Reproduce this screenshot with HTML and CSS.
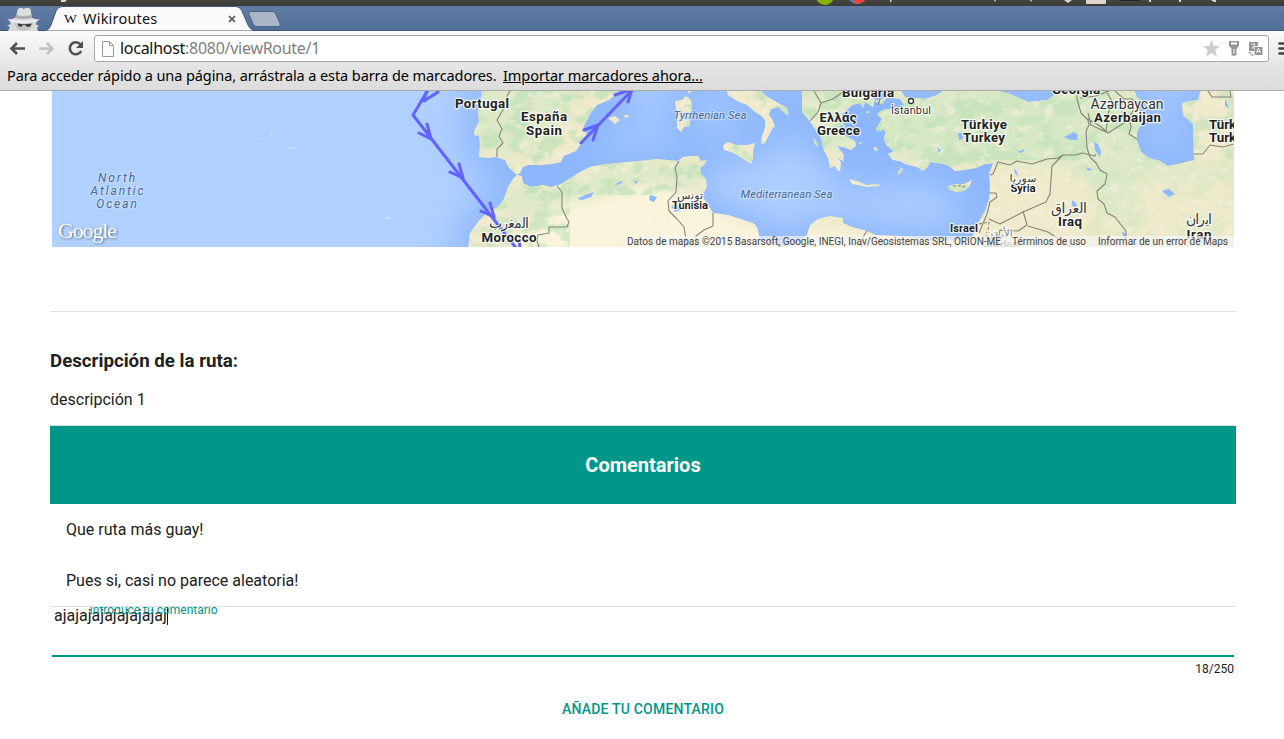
FILE: index.html
```html
<!DOCTYPE html>
<html lang="es">
<head>
<meta charset="utf-8">
<title>Wikiroutes</title>
<link rel="stylesheet" href="styles.css">
</head>
<body>
<div class="system-bar">
  <svg width="1284" height="6" viewBox="0 0 1284 6">
    <path d="M61 0h6l-2 2h-4z" fill="#ddd8d0"/>
    <circle cx="825" cy="-4" r="9" fill="#85b500"/>
    <circle cx="857" cy="-5" r="9" fill="#3b8de0"/><circle cx="858.500" cy="-4.500" r="8" fill="#f04135"/>
    <path d="M890 0h1.500v2h-1.500zM994 0h2l-1 2zM1030 0h2l-1 2zM1064 0h8l-4 3zM1149 0h2v2h-2zM1179 0h2v2h-2zM1211 0l3 2h2v-2z" fill="#dbd7ce"/>
    <rect x="1086" y="-4" width="20" height="8" rx="1" fill="#ddd6cc"/>
    <rect x="1120" y="-2" width="20" height="3" fill="#252522"/>
  </svg>
</div>
<header class="tab-strip">
  <svg class="incognito" width="46" height="25" viewBox="0 6 46 25">
    <path d="M9 20l7-2.500h15l7 2.500-2.500 4 3.500 2-2 1.500 1 3.500H8l2-4-3-1.500 4-1.500z" fill="#d9dadb"/>
    <path d="M15.500 18L18 9q2.500-2.500 5.500 0 4-2.500 7 0l1.500 9q-8 2.500-16.500 0z" fill="#dcdddd"/>
    <path d="M15.500 18q8 2 16.500 0l-.5-3q-8 2-15.500 0z" fill="#aaadb0"/>
    <path d="M7 19q8 1.500 16.500 1.500T40 19q-4 4-16.500 4T7 19z" fill="#ececec"/>
    <path d="M14 23q9 1.500 19 0l-3 6-6.500 2-6.500-2z" fill="#c2c3c4"/>
    <path d="M18 23.500l5 .8h2.500l6-.8-.5 2q-1.500 2-4.500 1l-1.500-1.500h-2L21.500 26.500q-2.500.6-3.500-1z" fill="#3a3a3a"/>
  </svg>
  <div class="tab">
    <svg class="tab-shape" width="214" height="25" viewBox="0 0 214 25"><path d="M0 25q4-1 6-6l5-14q2-4.500 6-4.500h174q4 0 6 4.500l6 14q3 6 9 6z" fill="#fafafa" stroke="#3e577b" stroke-width="1"/></svg>
    <span class="favicon">W</span><span class="tab-title">Wikiroutes</span>
    <svg class="tab-close" width="8" height="8" viewBox="0 0 8 8"><path d="M1 1l6 6M7 1L1 7" stroke="#555" stroke-width="1.700"/></svg>
  </div>
  <svg class="new-tab" width="34" height="17" viewBox="0 0 34 17"><path d="M3 .5h22q2 0 3 3l4 9q1 3-1.500 3H9q-3 0-4-3L1 3.500Q0 .5 3 .5z" fill="#a9b6c5" stroke="#49648b"/></svg>
</header>
<div class="toolbar">
  <svg class="nav-icons" width="86" height="31" viewBox="0 31 86 31" fill="none">
    <path d="M25 48.500H12M17 43l-5.500 5.500L17 54" stroke="#505050" stroke-width="2.600"/>
    <path d="M39 48.500h13M47 43l5.500 5.500L47 54" stroke="#c2c2c2" stroke-width="2.600"/>
    <path d="M80.500 44.500a6 6 0 1 0 .7 6.500" stroke="#505050" stroke-width="2.600"/><path d="M83 41v7h-7z" fill="#505050"/>
  </svg>
  <div class="address">
    <svg width="12" height="16" viewBox="0 0 12 16"><path d="M.5.500h7l4 4v11H.500zM7.500.500v4h4" fill="#fbfbfb" stroke="#999"/></svg>
    <span class="url">localhost<span class="path">:8080/viewRoute/1</span></span>
    <svg class="actions" width="64" height="20" viewBox="1200 38 64 20">
      <path d="M1211.500 40l2.300 6h6.200l-4.800 4 1.900 7-5.600-4-5.600 4 1.900-7-4.800-4h6.200z" fill="#ccc"/>
      <path d="M1229 41h10v5l-2.500 2.500V55l-2.500 1-2.500-1v-6.500L1229 46z" fill="#949494"/><path d="M1231 42.500h6v2h-6zM1233.500 49h1v5h-1z" fill="#fff"/>
      <path d="M1249 42h9v4h-4v5h-5z" fill="#949494"/><path d="M1251 44h4l-3 4h2" stroke="#e6e6e6" fill="none"/>
      <rect x="1254.500" y="47" width="8" height="8" fill="#949494"/><path d="M1256.500 53l2-5 2 5m-3.500-1.500h3" stroke="#fff" fill="none"/>
      <path d="M1248.500 52.500h2m-1 1.500h3m-1 1.500h2" stroke="#949494"/>
    </svg>
  </div>
  <svg class="menu" width="6" height="14" viewBox="0 0 6 14"><path d="M1.500 1.500h6M1.500 6.500h6M1.500 11.500h6" stroke="#444" stroke-width="2.600" stroke-linecap="round"/></svg>
</div>
<div class="bookmarks"><span class="hint">Para acceder rápido a una página, arrástrala a esta barra de marcadores.</span><span class="import">Importar marcadores ahora...</span></div>

<main class="page">
  <svg class="map" width="1182" height="156" viewBox="52 91 1182 156">
    <defs>
      <filter id="soft" x="-10%" y="-40%" width="120%" height="180%"><feGaussianBlur stdDeviation="18"/></filter>
      <filter id="blend" x="-10%" y="-40%" width="120%" height="180%"><feGaussianBlur stdDeviation="7"/></filter>
      <filter id="glow" x="-50%" y="-100%" width="200%" height="300%"><feGaussianBlur stdDeviation="14"/></filter>
      <filter id="green" x="0" y="0" width="100%" height="100%" color-interpolation-filters="sRGB">
        <feTurbulence type="fractalNoise" baseFrequency=".045 .06" numOctaves="4" seed="8"/>
        <feColorMatrix values="0 0 0 0 .765  0 0 0 0 .89  0 0 0 0 .73  7 0 0 0 -3.300"/>
      </filter>
      <filter id="pale" x="0" y="0" width="100%" height="100%" color-interpolation-filters="sRGB">
        <feTurbulence type="fractalNoise" baseFrequency=".09 .12" numOctaves="3" seed="21"/>
        <feColorMatrix values="0 0 0 0 .96  0 0 0 0 .94  0 0 0 0 .87  0 10 0 0 -6"/>
      </filter>
      <path id="coast" d="M481 85V100l-3 10 1 12-5 9 1 5 4-1 1 10-1 12 9 1 8-1 9 3 4 8 8 7 3-2 3-6 6-2 12 0 11-1 9-2 3-6 12-5 7-9 4-7-4-7 3-6 5-9 6-8 12-5 9-7V85z
        M517 175L522 176 523 183 531 187 543 185 551 187 559 185 572 177 580 172 590 167 600 165 617 163 640 161 657 159 678 161 683 157 690 156 698 156 701 161 707 160 704 165 700 168 701 174 706 179 707 187 702 195 705 200 708 205 713 213 728 215 753 223 757 227 760 240 780 247 800 243 807 235 810 225 818 219 830 216 843 218 843 223 852 227 867 231 875 235 900 236 935 241 960 240 972 237 978 223 985 211 989 199 990 186 989 174 993 163 985 164 976 168 965 170 955 171 949 166 944 164 937 163 930 162 927 168 923 171 917 167 905 164 900 161 893 160 888 154 894 151 886 145 884 138 886 132 878 126 882 119 877 114 883 110 898 108 905 106 900 99 887 97 882 104 875 101 873 96 893 85H897L905 97 925 99 935 96 943 91 943 85H992L995 90 1010 94 1028 102 1048 100 1056 93 1058 85H1132L1137 97 1142 103 1138 107 1143 121 1137 132 1137 141 1141 152 1149 158 1160 161 1168 166 1182 163 1194 160 1193 131 1193 124 1183 115 1182 103 1190 101 1198 100 1202 85H1240V255H467L469 242 470 233 478 222 488 211 498 207 504 199 508 187 513 179z
        M725 85l3 10 9 6 10 4 8 7 5 3 5 5 0 8-3 8-1 8 4-1 3-6 4-8 3-3-3-7-3-4 2-6 7-2 8 7 3 1-2-7-9-5-12-7-7-8V85z
        M723 145l5-3 8 3 11 0 8-2-2 8 0 7-2 6-6-4-8-5-6-3-7-2z
        M675 101l7-1 4-4 5 4 1 8-2 9 0 9-6 1-3 5-4-4 0-11-1-9z
        M802 85v27l7 8 5 8 6 6 2 8 2 9 4 7 2 10 5-2 3 5 2 0 1-8-3-5 5 3 1-6-7-9 6 1 8 3 5-4-1-5-8-4-6-4-2-8 7 2-5-6 1-7 10-9 8-2 3 5 2-6 8 5 1-6 13-3V85z
        M849 179l8 2 10 4 12-1 1 2-12 1-16-3zM948 186l8-2 8 0 8-4-3 7-5 4-8 1-6-2zM876 127l5 0 1 4-5 0zM873 147l3 0 2 3-3 1zM897 175l3-6 3-1-2 5zM608 118l7-2 5 4-5 4zM624 115l4 0 1 2-4 1zM686 85h6v6l-3 3zM813 138l3 3 2 6-3-3zM866 112l3-1 0 2-3 0zM859 142l3 1-2 1z"/>
      <clipPath id="land"><use href="#coast"/></clipPath>
      <linearGradient id="fade"><stop offset="0" stop-color="#f5f5f5" stop-opacity="0"/><stop offset=".05" stop-color="#f5f5f5" stop-opacity=".65"/><stop offset="1" stop-color="#f5f5f5" stop-opacity=".72"/></linearGradient>
    </defs>
    <rect x="52" y="91" width="1182" height="156" fill="#b0d0ff"/>
    <use href="#coast" stroke="#86b1fc" stroke-width="26" fill="#8bb5fc" filter="url(#soft)" opacity=".85"/>
    <ellipse cx="770" cy="184" rx="70" ry="14" fill="#acceff" filter="url(#glow)"/>
    <ellipse cx="860" cy="205" rx="80" ry="12" fill="#a9cbff" filter="url(#glow)"/>
    <use href="#coast" fill="#efeacb"/>
    <g clip-path="url(#land)">
      <path d="M560 202l100-20 50 24 40 20 80 4 80 10 90 0v20H500z" fill="#f9f4db" filter="url(#blend)"/>
      <path d="M800 85h335l12 70 40 15 50-10v12l-50 12-50-8-5 60-40-45-20-25-60-5-30 0-30-4-70-8-90 5zM470 85h115l-20 40-40 32-50-8zM503 190l25-5 40 2 30-17 50-8 60 0-3 25-60-5-60 15-50 15-20 12z" fill="#dce9c7" opacity=".95" filter="url(#blend)"/>
      <path d="M875 105l20 0 60-5 40-8 60 14 25 10 0 35-40 6-50 4-60 4-45-14z" fill="#d5e7c4" opacity=".8" filter="url(#blend)"/>
      <rect x="460" y="85" width="530" height="110" filter="url(#green)" opacity=".8"/>
      <rect x="990" y="85" width="250" height="75" filter="url(#green)" opacity=".7"/>
      <rect x="460" y="195" width="110" height="58" filter="url(#green)" opacity=".7"/>
      <rect x="1070" y="160" width="170" height="93" filter="url(#green)" opacity=".25"/>
      <rect x="460" y="85" width="780" height="170" filter="url(#pale)" opacity=".5"/>
    </g>
    <g fill="#8db8ff">
      <path d="M577 199l8-4 9-3-3 5-9 3zM615 184l6-3 2 1-5 3zM633 180l5 2-2 2zM650 195l7 2-3 5-5-2zM671 206l7-1 3 5-6 2zM1064 137l10-5 4 3-1 5-6 0zM1094 142l4 2 3 8-1 5-5-7zM1017 152l8-3-3 4zM1072 200l4 3 1 4-5-1zM1162 191l7-2 6 5-6 3zM958 133l4 0 1 6-4 1zM937 147l4 3-2 3zM1014 168l3 4 1 5-3-4zM1122 231l4 3-2 7zM1225 99l4 9-4-2zM1085 167l7 2-3 2z"/>
    </g>
    <g fill="#cce0fe"><path d="M253 136l4 2 4 0 0 2-5-2zM270 133h3v2h-3zM287 147h8v1.500h-8zM385 217h5v2h-5z"/></g>
    <g fill="none" stroke="#858579" stroke-width="1.100" stroke-linejoin="round">
      <path d="M510 91l-3 5-3 12-7 12 5 9-3 7 4 7-6 6v8M557 186l5 6 0 16 4 9 3 5-2 5h-18v6l-11 2-1 6 3 9-5 6M679 161l-4 7 2 9-1 15-8 9 1 10 8 8 7 8 3 19M713 213v13l-9 4-8 6v11M814 91l7 12-3 9-8 9M821 103l12-4 10-7M878 105l2-6-1-8M867 231l-4 6-2 10"/>
      <path d="M990 175l3-1 5-12 12 3 7-4 15 3 15-5 11-1 5-3 13 0 6-2 13 3 1-2M1063 155l-11 11-2 28-4 8-23 10-23 12-11-5M1023 211l4 14-9 6-18-1-4 18M1028 226l20 6 23 15M1077 91l0 8 4 14 7 7 1 5-3 6 1 17 3 9 6 6 4 7 7 4-2 10-8 7 1 8 6 5 3 9 8 4 7 9 4 5v16M1088 119l12 7 8 7 16-10 10-8M1134 109l-5 9 2 9-2 7 8 5M1080 98l16-2 13-5M1088 113l3 12 15 7 2-17 4-14-6-10M1115 91l9 8 8 0 7 5M1194 154l9 0 7-9 13 2 11-3M1208 91l4 6 19 0-1-6M979 233l8-19 3-12 7-5-1-4-7 0"/>
      <path d="M953 186h5l3-1 2 2 4-1M979 224l10-2-1 9-5 8" stroke-dasharray="3 2"/>
    </g>
    <g class="route"><path d="M431 85L413 115l110 142M637 85L581 143"/><path d="M424 101l3-12M424 101l14-9M419 133l12 6-4-15M450 172l13 6-4-14M481 211l13 6-4-14M509 249l12 5-2-13M584 130l14-5-5 15M615 95l17-6-4 13"/></g>
    <g class="labels">
      <g class="sea spaced"><text x="117.500" y="182">North</text><text x="118" y="195">Atlantic</text><text x="117.500" y="208">Ocean</text></g>
      <g class="sea"><text x="710" y="119" textLength="73">Tyrrhenian Sea</text><text x="786.500" y="198" textLength="92">Mediterranean Sea</text></g>
      <g class="country"><text x="482" y="108" textLength="54">Portugal</text><text x="544" y="121" textLength="46">España</text><text x="544" y="135" textLength="36">Spain</text><text x="509" y="242" textLength="55">Morocco</text><text x="838" y="122" textLength="37">Ελλάς</text><text x="838.500" y="135" textLength="43">Greece</text><text x="868" y="97" textLength="52">Bulgaria</text><text x="1076" y="94" textLength="48">Georgia</text><text x="984" y="129" textLength="46">Türkiye</text><text x="984" y="142" textLength="42">Turkey</text><text x="1127.500" y="122" textLength="67">Azerbaijan</text><text x="1070" y="226" textLength="24">Iraq</text><text x="1199" y="239" textLength="25">Iran</text><text x="1209" y="129" class="start">Türkmenistan</text><text x="1209" y="142" class="start">Turkmenistan</text></g>
      <g class="country small"><text x="690" y="209" textLength="36">Tunisia</text><text x="1023" y="192" textLength="25">Syria</text><text x="964" y="232" textLength="28">Israel</text><text x="1001" y="248" class="dim">Jordan</text></g>
      <g class="local"><text x="1127" y="109" textLength="73">Azərbaycan</text><text x="509" y="228" textLength="40">المغرب</text><text x="1069" y="213" textLength="36">العراق</text><text x="1199" y="224" textLength="26">ايران</text><text class="little" x="911" y="114" textLength="40">İstanbul</text><text class="little" x="690" y="199" textLength="26">تونس</text><text class="little" x="1023" y="182" textLength="27">سوريا</text><text class="little dim" x="999" y="237">الأردن</text></g>
      <circle cx="911" cy="101" r="2.500" fill="#fff" stroke="#333" stroke-width="1.300"/>
    </g>
    <rect x="615" y="236" width="619" height="11" fill="url(#fade)"/>
    <g class="credits"><text x="627" y="245" textLength="374">Datos de mapas ©2015 Basarsoft, Google, INEGI, Inav/Geosistemas SRL, ORION-ME</text><text x="1012" y="245" textLength="74">Términos de uso</text><text x="1098" y="245" textLength="130">Informar de un error de Maps</text></g>
    <text class="google" x="58" y="238" textLength="59">Google</text>
  </svg>
  <hr class="rule">
  <section class="description"><h3>Descripción de la ruta:</h3><p>descripción 1</p></section>
  <section class="comments">
    <h2>Comentarios</h2>
    <p>Que ruta más guay!</p>
    <p>Pues si, casi no parece aleatoria!</p>
  </section>
  <form class="comment-form">
    <div class="field"><span class="value">ajajajajajajajajaj</span><i class="caret"></i><label class="floating">Introduce tu comentario</label></div>
    <span class="counter">18/250</span>
    <span class="submit">AÑADE TU COMENTARIO</span>
  </form>
</main>
</body>
</html>
```
FILE: styles.css
```css
* { box-sizing: border-box; }
body { margin: 0; width: 1284px; height: 739px; overflow: hidden; background: #fff; color: #212121; font-family: Roboto, sans-serif; }
svg { display: block; flex: none; }

.system-bar { height: 6px; background: linear-gradient(#45443f, #3c3b37); overflow: hidden; }
.tab-strip { height: 25px; display: flex; background: linear-gradient(#637ca3, #506e98); border-bottom: 1px solid #3e577b; font-family: "Noto Sans", sans-serif; }
.tab { width: 200px; height: 25px; position: relative; display: flex; align-items: center; padding: 0 10px 0 18px; }
.tab-shape { position: absolute; left: -1px; top: 0; }
.favicon { position: relative; width: 19px; font: 13.5px "Liberation Serif", serif; color: #111; }
.tab-title { position: relative; flex: 1; color: #111; font-size: 14.5px; line-height: 22px; padding-bottom: 2px; letter-spacing: .2px; }
.tab-close { position: relative; }
.new-tab { margin: 5px 0 0 2px; }

.toolbar { height: 31px; display: flex; align-items: center; background: linear-gradient(#fafafa, #e8e8e8); }
.nav-icons { margin-right: 8px; }
.address { width: 1175px; height: 27px; margin-top: 4px; border: 1px solid #a6a6a6; border-radius: 3px; background: #fff; display: flex; align-items: center; padding: 0 4px 0 7px; }
.url { flex: 1; margin-left: 6px; padding-bottom: 2px; color: #111; font: 16px/22px "Noto Sans", sans-serif; letter-spacing: -.28px; }
.path { color: #808080; }
.actions { margin-bottom: 2px; }
.menu { margin: 4px 0 0 9px; }
.bookmarks { height: 29px; display: flex; align-items: center; gap: 6px; padding: 0 7px 2px; background: linear-gradient(#e6e6e6, #dcdcdc); border-bottom: 1px solid #aaa; color: #000; font: 14.5px/20px "Noto Sans", sans-serif; white-space: nowrap; }
.hint { width: 490px; letter-spacing: -.09px; }
.import { text-decoration: underline; letter-spacing: -.06px; }

.page { padding: 0 48px 0 50px; }
.map { margin-left: 2px; overflow: hidden; }
.labels text { text-anchor: middle; paint-order: stroke; stroke: rgba(255,255,255,.75); stroke-width: 2.5px; stroke-linejoin: round; }
.labels .start { text-anchor: start; }
.sea { font: italic 11.5px Roboto, sans-serif; fill: #4d6a94; }
.labels .sea text { stroke: rgba(210,228,255,.6); }
.spaced { font-size: 12px; letter-spacing: 1.9px; }
.country { font: 700 13.3px Roboto, sans-serif; fill: #222; }
.small { font-size: 11.3px; }
.local { font: 14px Roboto, "DejaVu Sans", sans-serif; fill: #333; }
.little { font-size: 11px; }
.labels .dim { fill: #888; }
.route { fill: none; stroke: #6262ff; stroke-width: 3px; stroke-linecap: round; stroke-linejoin: round; }
.credits { font: 10px Roboto, sans-serif; fill: #444; }
.google { font: 22px "Liberation Serif", serif; fill: #fff; filter: drop-shadow(1px 1px 1px #64748c); }

.rule { height: 1px; margin: 64px 0 38px; border: 0; background: #e0e0e0; }
.description h3 { margin: 0; font-size: 18.72px; line-height: 22px; }
.description p { margin: 18px 0 15px; font-size: 16px; line-height: 20px; }
.comments { border-top: 1px solid #e0e0e0; border-bottom: 1px solid #e0e0e0; height: 182px; }
.comments h2 { margin: 0; height: 78px; background: #009688; color: #fff; text-align: center; font-size: 20px; line-height: 78px; }
.comments p { margin: 0; padding: 16px 16px 15px; font-size: 16px; line-height: 20px; }
.comment-form { display: flex; flex-direction: column; padding: 0 2px; }
.field { position: relative; height: 50px; border-bottom: 2px solid #009688; padding-left: 2px; display: flex; overflow: hidden; }
.value { font-size: 16px; line-height: 18px; }
.caret { width: 1px; height: 18px; background: #111; }
.floating { position: absolute; left: 37.5px; top: -5px; color: #009688; font-size: 12px; line-height: 16px; }
.counter { align-self: flex-end; margin-top: 4px; font-size: 12px; line-height: 16px; }
.submit { align-self: center; margin-top: 22px; color: #009688; font-size: 14px; font-weight: 500; line-height: 20px; letter-spacing: .2px; }
```
